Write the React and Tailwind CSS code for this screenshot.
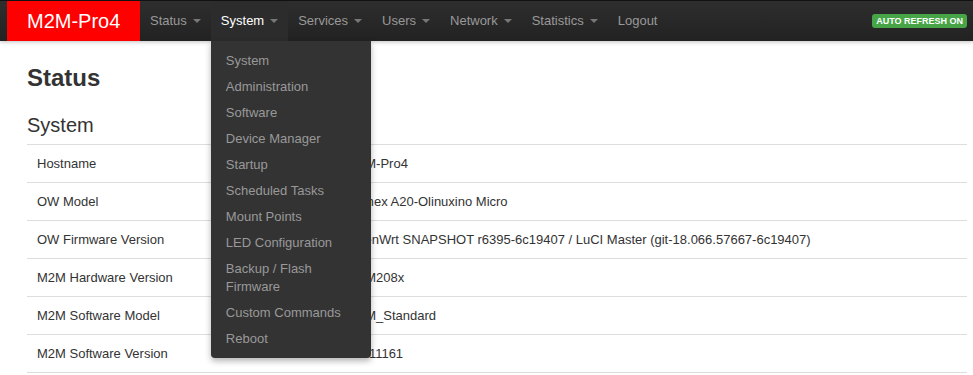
const navItems = [
  { label: "Status", caret: true },
  { label: "System", caret: true, active: true },
  { label: "Services", caret: true },
  { label: "Users", caret: true },
  { label: "Network", caret: true },
  { label: "Statistics", caret: true },
  { label: "Logout" },
];

const systemMenu = [
  "System",
  "Administration",
  "Software",
  "Device Manager",
  "Startup",
  "Scheduled Tasks",
  "Mount Points",
  "LED Configuration",
  "Backup / Flash Firmware",
  "Custom Commands",
  "Reboot",
];

const rows = [
  ["Hostname", "M2M-Pro4"],
  ["OW Model", "Olimex A20-Olinuxino Micro"],
  ["OW Firmware Version", "OpenWrt SNAPSHOT r6395-6c19407 / LuCI Master (git-18.066.57667-6c19407)"],
  ["M2M Hardware Version", "M2M208x"],
  ["M2M Software Model", "M2M_Standard"],
  ["M2M Software Version", "20011161"],
];

function Caret() {
  return (
    <span className="ml-[6px] inline-block h-0 w-0 border-x-[4px] border-t-[4px] border-x-transparent border-t-[#777] align-middle" />
  );
}

function SystemDropdown() {
  return (
    <ul className="absolute left-0 top-full z-10 w-[160px] rounded-b-[4px] bg-[#333] pb-[6px] pt-[7px] shadow-[0_3px_6px_rgba(0,0,0,0.3)]">
      {systemMenu.map((item) => (
        <li key={item} className="px-[15px] py-[4px] text-[13px] leading-[18px] text-[#999]">
          {item}
        </li>
      ))}
    </ul>
  );
}

export default function App() {
  return (
    <div className="min-h-screen bg-white font-['Liberation_Sans',Arial,sans-serif] text-[#333]">
      <header className="relative z-10 flex h-[41px] items-stretch border-t border-[#111] bg-gradient-to-b from-[#2e2e2e] to-[#222] shadow-[0_1px_4px_rgba(0,0,0,0.25)]">
        <div className="ml-[7px] flex w-[133px] items-center bg-[#ff0000] pl-[20px] text-[20px] text-white">
          M2M-Pro4
        </div>
        <nav className="flex items-stretch">
          {navItems.map((item) => (
            <div
              key={item.label}
              className={
                item.active
                  ? "relative flex items-center bg-[#2c2c2c] px-[10px] text-[13px] text-white"
                  : "relative flex items-center px-[10px] text-[13px] text-[#999]"
              }
            >
              {item.label}
              {item.caret && <Caret />}
              {item.active && <SystemDropdown />}
            </div>
          ))}
        </nav>
        <div className="ml-auto mr-[6px] flex items-center">
          <span className="rounded-[3px] bg-[#47a447] px-[4px] text-[9px] font-bold leading-[14px] text-white">
            AUTO REFRESH ON
          </span>
        </div>
      </header>

      <main className="px-[27px] pr-[6px]">
        <h2 className="mt-[23px] text-[24px] font-bold leading-[28px]">Status</h2>
        <h3 className="mt-[21px] text-[20px] leading-[24px]">System</h3>
        <table className="mt-[7px] w-full border-b border-[#ddd] text-[13px]">
          <tbody>
            {rows.map(([label, value]) => (
              <tr key={label} className="border-t border-[#ddd]">
                <td className="w-[33%] px-[10px] py-[8px] leading-[21px]">{label}</td>
                <td className="px-[10px] py-[8px] leading-[21px]">{value}</td>
              </tr>
            ))}
          </tbody>
        </table>
      </main>
    </div>
  );
}
